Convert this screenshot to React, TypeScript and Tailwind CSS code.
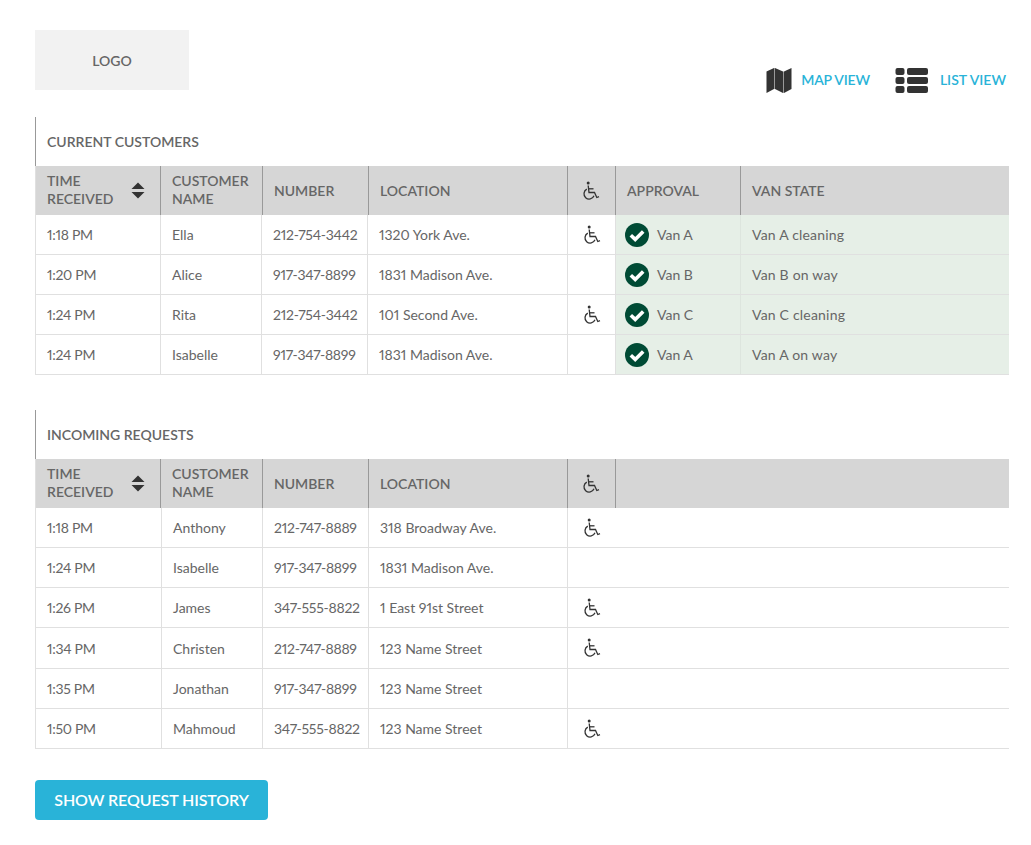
const headCols = ['w-[125px]', 'w-[102px]', 'w-[106px]', 'w-[199px]', 'w-[48px]', 'w-[125px]', 'flex-1'];
const currentCols = ['w-[125px]', 'w-[101px]', 'w-[106px]', 'w-[200px]', 'w-[48px]', 'w-[125px]', 'flex-1'];
const incomingCols = ['w-[126px]', 'w-[101px]', 'w-[106px]', 'w-[199px]', 'w-[48px]'];

const current = [
  ['1:18 PM', 'Ella', '212-754-3442', '1320 York Ave.', true, 'Van A', 'Van A cleaning'],
  ['1:20 PM', 'Alice', '917-347-8899', '1831 Madison Ave.', false, 'Van B', 'Van B on way'],
  ['1:24 PM', 'Rita', '212-754-3442', '101 Second Ave.', true, 'Van C', 'Van C cleaning'],
  ['1:24 PM', 'Isabelle', '917-347-8899', '1831 Madison Ave.', false, 'Van A', 'Van A on way'],
] as const;

const incoming = [
  ['1:18 PM', 'Anthony', '212-747-8889', '318 Broadway Ave.', true, 40],
  ['1:24 PM', 'Isabelle', '917-347-8899', '1831 Madison Ave.', false, 40],
  ['1:26 PM', 'James', '347-555-8822', '1 East 91st Street', true, 40],
  ['1:34 PM', 'Christen', '212-747-8889', '123 Name Street', true, 41],
  ['1:35 PM', 'Jonathan', '917-347-8899', '123 Name Street', false, 40],
  ['1:50 PM', 'Mahmoud', '347-555-8822', '123 Name Street', true, 40],
] as const;

function Wheelchair() {
  return (
    <svg width="20" height="20" viewBox="0 0 20 20" fill="none" stroke="#333" strokeWidth="1.3">
      <circle cx="7.2" cy="2" r="1.5" fill="#333" stroke="none" />
      <path d="M7.2 4.5 L8 11.5 H13.5 L15.8 16.5 L18 15.7" />
      <path d="M8 7.8 H12.5" />
      <path d="M5.8 8.2 A5.2 5.2 0 1 0 13 14.8" />
    </svg>
  );
}

function SortIcon() {
  return (
    <svg width="14" height="17" viewBox="0 0 14 17" fill="#333">
      <path d="M7 0.5 L13.5 7 H0.5 Z" />
      <path d="M0.5 10 H13.5 L7 16.5 Z" />
    </svg>
  );
}

function CheckBadge() {
  return (
    <svg width="24" height="24" viewBox="0 0 24 24" className="shrink-0">
      <circle cx="12" cy="12" r="12" fill="#004b35" />
      <path d="M5.8 12.2 L10.2 16.4 L18.2 8.4" fill="none" stroke="#fff" strokeWidth="3.6" />
    </svg>
  );
}

function MapIcon() {
  return (
    <svg width="26" height="27" viewBox="0 0 26 27" fill="#333">
      <path d="M0.5 4.5 L8 1 V22 L0.5 26 Z" />
      <path d="M9 1 L17 4.5 V26 L9 22 Z" />
      <path d="M18 4.5 L25.5 1 V22 L18 26 Z" />
      <path d="M8.5 1 V22 M17.5 4.5 V26" stroke="#999" strokeWidth="1" />
    </svg>
  );
}

function ListIcon() {
  return (
    <svg width="33" height="26" viewBox="0 0 33 26" fill="#333">
      {[0, 9, 18].map((y) => (
        <g key={y}>
          <rect x="0.5" y={y} width="9" height="7" rx="2" />
          <rect x="12" y={y} width="21" height="7" rx="2" />
        </g>
      ))}
    </svg>
  );
}

function HeadCell({ className, children }: { className: string; children?: React.ReactNode }) {
  return (
    <div className={`${className} flex items-center border-r border-[#999] pl-[11px] text-[14px] leading-[18px] font-semibold text-[#666] last:border-r-0`}>
      {children}
    </div>
  );
}

function TableHead({ extended }: { extended: boolean }) {
  return (
    <div className="flex h-[49px] bg-[#d6d6d6]">
      <HeadCell className={`${headCols[0]} justify-between pr-[15px]`}>
        <span className="-mt-[2px]">TIME<br />RECEIVED</span>
        <SortIcon />
      </HeadCell>
      <HeadCell className={headCols[1]}><span className="-mt-[2px]">CUSTOMER<br />NAME</span></HeadCell>
      <HeadCell className={headCols[2]}>NUMBER</HeadCell>
      <HeadCell className={headCols[3]}>LOCATION</HeadCell>
      <HeadCell className={headCols[4]}><span className="ml-[2px]"><Wheelchair /></span></HeadCell>
      {extended && <HeadCell className={headCols[5]}>APPROVAL</HeadCell>}
      {extended && <HeadCell className={headCols[6]}>VAN STATE</HeadCell>}
      {!extended && <div className="flex-1" />}
    </div>
  );
}

function Cell({ className, children }: { className: string; children?: React.ReactNode }) {
  return <div className={`${className} flex items-center border-r border-[#e0e0e0] pl-[11px] last:border-r-0`}>{children}</div>;
}

export default function App() {
  return (
    <div className="h-[845px] w-[1031px] bg-white pl-[35px] pr-[22px] pt-[30px] text-[14px] text-[#666] [font-family:Lato,'Open_Sans',sans-serif] proportional-nums">
      <div className="flex h-[87px] items-start justify-between">
        <div className="flex h-[60px] w-[154px] items-center justify-center bg-[#f2f2f2] text-[14px] font-semibold text-[#666]">LOGO</div>
        <div className="mt-[37px] mr-[3px] flex items-center text-[14px] font-semibold text-[#29b3d8]">
          <MapIcon />
          <span className="ml-[9px] pb-[2px] tracking-[-0.2px]">MAP VIEW</span>
          <span className="ml-[25px]"><ListIcon /></span>
          <span className="ml-[12px] pb-[2px]">LIST VIEW</span>
        </div>
      </div>

      <section className="flex h-[49px] items-center border-l border-[#999] pl-[11px] text-[14px] font-semibold text-[#666]">CURRENT CUSTOMERS</section>
      <div className="border-l border-[#e0e0e0]">
        <TableHead extended />
        {current.map((row, i) => (
          <div key={i} className="flex h-[40px] border-b border-[#e0e0e0]">
            <Cell className={`${currentCols[0]} tracking-[-0.3px]`}>{row[0]}</Cell>
            <Cell className={currentCols[1]}>{row[1]}</Cell>
            <Cell className={`${currentCols[2]} tracking-[-0.25px]`}>{row[2]}</Cell>
            <Cell className={currentCols[3]}>{row[3]}</Cell>
            <Cell className={currentCols[4]}>{row[4] && <span className="ml-[3px]"><Wheelchair /></span>}</Cell>
            <div className={`${currentCols[5]} flex items-center gap-[8px] border-r border-[#dde5de] bg-[#e6efe7] pl-[9px]`}>
              <CheckBadge />
              {row[5]}
            </div>
            <div className={`${currentCols[6]} flex items-center bg-[#e6efe7] pl-[11px] tracking-[0.2px]`}>{row[6]}</div>
          </div>
        ))}
      </div>

      <section className="mt-[35px] flex h-[49px] items-center border-l border-[#999] pl-[11px] text-[14px] font-semibold text-[#666]">INCOMING REQUESTS</section>
      <div className="border-l border-[#e0e0e0]">
        <TableHead extended={false} />
        {incoming.map((row, i) => (
          <div key={i} className={`flex border-b border-[#e0e0e0] ${row[5] === 41 ? 'h-[41px]' : 'h-[40px]'}`}>
            <Cell className={`${incomingCols[0]} tracking-[-0.3px]`}>{row[0]}</Cell>
            <Cell className={incomingCols[1]}>{row[1]}</Cell>
            <Cell className={`${incomingCols[2]} tracking-[-0.25px]`}>{row[2]}</Cell>
            <Cell className={incomingCols[3]}>{row[3]}</Cell>
            <div className={`${incomingCols[4]} flex items-center pl-[14px]`}>{row[4] && <Wheelchair />}</div>
          </div>
        ))}
      </div>

      <button className="mt-[31px] flex h-[40px] w-[233px] items-center justify-center rounded-[4px] bg-[#29b3d8] text-[16px] font-semibold tracking-[-0.1px] text-white">
        SHOW REQUEST HISTORY
      </button>
    </div>
  );
}
